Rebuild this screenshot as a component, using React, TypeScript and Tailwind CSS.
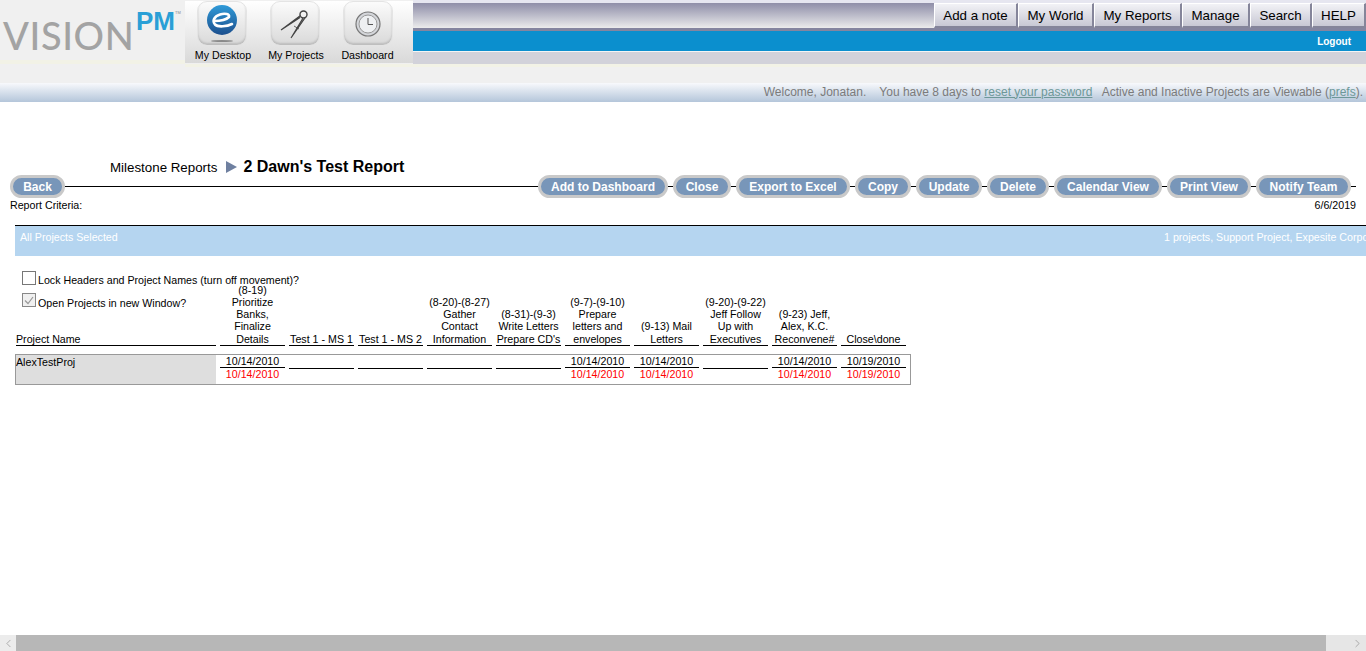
import { ChevronLeft, ChevronRight } from 'lucide-react';

const topTabs = [
  { label: 'Add a note', w: 'w-[84px]' },
  { label: 'My World', w: 'w-[76px]' },
  { label: 'My Reports', w: 'w-[88px]' },
  { label: 'Manage', w: 'w-[68px]' },
  { label: 'Search', w: 'w-[62px]' },
  { label: 'HELP', w: 'w-[54px]' },
];

const actions = [
  { label: 'Add to Dashboard', w: 'w-[130px]' },
  { label: 'Close', w: 'w-[58px]' },
  { label: 'Export to Excel', w: 'w-[114px]' },
  { label: 'Copy', w: 'w-[56px]' },
  { label: 'Update', w: 'w-[66px]' },
  { label: 'Delete', w: 'w-[62px]' },
  { label: 'Calendar View', w: 'w-[108px]' },
  { label: 'Print View', w: 'w-[84px]' },
  { label: 'Notify Team', w: 'w-[95px]' },
];

const milestones = [
  { title: '(8-19)\nPrioritize\nBanks,\nFinalize\nDetails', date: '10/14/2010' },
  { title: 'Test 1 - MS 1' },
  { title: 'Test 1 - MS 2' },
  { title: '(8-20)-(8-27)\nGather\nContact\nInformation' },
  { title: '(8-31)-(9-3)\nWrite Letters\nPrepare CD\'s' },
  { title: '(9-7)-(9-10)\nPrepare\nletters and\nenvelopes', date: '10/14/2010' },
  { title: '(9-13) Mail\nLetters', date: '10/14/2010' },
  { title: '(9-20)-(9-22)\nJeff Follow\nUp with\nExecutives' },
  { title: '(9-23) Jeff,\nAlex, K.C.\nReconvene#', date: '10/14/2010' },
  { title: 'Close\\done', date: '10/19/2010' },
];

function EIcon() {
  return (
    <svg width="32" height="38" viewBox="0 0 32 38">
      <defs>
        <linearGradient id="ball" x1="0" y1="0" x2="0" y2="1">
          <stop offset="0" stopColor="#2f9ad8" />
          <stop offset="1" stopColor="#1c4f8e" />
        </linearGradient>
      </defs>
      <circle cx="16" cy="15" r="15" fill="url(#ball)" />
      <path d="M8 16 C14 16 20 15 23 12 C24 9 19 8 14 9.5 C8 11.5 6 16 9 19.5 C12 22.5 21 21.5 26 19" fill="none" stroke="#fff" strokeWidth="2.6" strokeLinecap="round" />
      <ellipse cx="16" cy="36" rx="11" ry="1" fill="#8a8a8a" />
    </svg>
  );
}

function CompassIcon() {
  return (
    <svg width="30" height="30" viewBox="0 0 30 30" fill="none" stroke="#444">
      <circle cx="23.5" cy="5.5" r="3.5" strokeWidth="1.4" />
      <path d="M20.5 6.5 L1 21 L20 8.5" strokeWidth="1.1" fill="#777" />
      <path d="M23 9 L11 29 L25 9" strokeWidth="1.1" fill="#777" />
      <path d="M14 17 L19 20" strokeWidth="0.8" />
    </svg>
  );
}

function ClockIcon() {
  return (
    <svg width="26" height="26" viewBox="0 0 26 26" fill="none">
      <circle cx="13" cy="13" r="12" fill="#d4d6da" stroke="#777" strokeWidth="1.2" />
      <circle cx="13" cy="13" r="9" fill="#eef0f2" stroke="#999" strokeWidth="1" />
      <path d="M13 7 V13.5 H18" stroke="#555" strokeWidth="1" />
    </svg>
  );
}

function NavButton({ label, icon, labelClass }: { label: string; icon: React.ReactNode; labelClass?: string }) {
  return (
    <div className="flex w-[73px] flex-col items-center">
      <div className="flex h-[45px] w-[50px] items-center justify-center rounded-[10px] border border-[#e4e4e4] bg-gradient-to-b from-[#fbfbfb] to-[#d9d9d9] shadow-[inset_0_-2px_2px_#bdbdbd]">
        {icon}
      </div>
      <span className={`mt-[2px] whitespace-nowrap text-[10.67px] leading-[14px] text-black ${labelClass ?? ''}`}>{label}</span>
    </div>
  );
}

function Pill({ label, w }: { label: string; w: string }) {
  return (
    <div className={`flex h-[23px] shrink-0 items-center justify-center rounded-full border-[3px] border-[#c9c9c9] bg-[#7896b9] text-[12px] font-bold text-white ${w}`}>
      {label}
    </div>
  );
}

export default function App() {
  return (
    <div className="flex h-[651px] w-[1366px] flex-col overflow-hidden bg-white font-['Liberation_Sans',sans-serif]">
      {/* header */}
      <div className="h-[83px] shrink-0 bg-[#f0f0f0]">
        <div className="flex h-[64px]">
          <div className="w-[185px] shrink-0">
            <div className="flex h-[60px] items-start pl-[3px]">
              <span className="mt-[9px] w-[133px] font-['Lato',sans-serif] text-[38px] font-medium leading-[52px] tracking-[0.6px] text-[#a3a3a3]">VISION</span>
              <span className="mt-[7px] text-[26px] font-bold leading-[28px] text-[#2a9fd6]">PM</span>
              <span className="mt-[10px] text-[4px] leading-[5px] text-[#888]">TM</span>
            </div>
            <div className="h-[4px] bg-[#f2f2e6]" />
          </div>
          <div className="mt-[1px] flex h-[62px] w-[228px] shrink-0 items-start bg-gradient-to-b from-white to-[#d9d9d9]">
            <NavButton label="My Desktop" icon={<EIcon />} labelClass="ml-[3px]" />
            <NavButton label="My Projects" icon={<CompassIcon />} labelClass="ml-[3px]" />
            <NavButton label="Dashboard" icon={<ClockIcon />} />
          </div>
          <div className="flex flex-1 flex-col">
            <div className="flex h-[31px] justify-end border-t-[3px] border-b-[3px] border-t-[#e6e6f0] border-b-[#85859f] bg-gradient-to-b from-[#8f8ea8] to-[#ececec]">
              {topTabs.map((tab) => (
                <div
                  key={tab.label}
                  className={`flex h-[25px] items-center justify-center border-l border-t border-white border-r-2 border-b-2 border-r-[#85859a] border-b-[#85859a] bg-gradient-to-b from-[#f2f2f6] to-[#c8c8d4] pt-[1px] text-[13.33px] text-black ${tab.w}`}
                >
                  {tab.label}
                </div>
              ))}
            </div>
            <div className="flex h-[20px] items-center justify-end bg-[#0b8fce] pr-[15px] pt-[1px] text-[10px] font-bold text-white">Logout</div>
            <div className="h-[13px] border-t border-t-[#f4f4f4] bg-[#d2d2da]" />
          </div>
        </div>
        <div className="ml-[185px] h-[3px] bg-[#f2f2e6]" />
      </div>
      <div className="flex h-[19px] shrink-0 items-center justify-end bg-gradient-to-b from-[#f8f9fc] to-[#b4c6da] pb-[2px] pr-[3px] text-[12px] text-[#7b7b7b]">
        <span className="whitespace-pre">
          Welcome, Jonatan.{'    '}You have 8 days to <span className="text-[#6d9898] underline">reset your password</span>{'   '}Active and Inactive Projects are Viewable (<span className="text-[#6d9898] underline">prefs</span>).
        </span>
      </div>

      {/* report */}
      <div className="flex-1 overflow-hidden">
        <div className="ml-[110px] mt-[55px] flex h-[20px] items-center">
          <span className="pt-[1px] text-[13.33px] text-black">Milestone Reports</span>
          <svg className="ml-[9px]" width="11" height="12" viewBox="0 0 11 12">
            <path d="M0 0 L11 6 L0 12 Z" fill="#6f80a0" />
          </svg>
          <span className="ml-[6px] text-[16px] font-bold text-black">2 Dawn's Test Report</span>
        </div>
        <div className="ml-[10px] mt-[-2px] flex w-[1346px] items-center">
          <Pill label="Back" w="w-[55px]" />
          <div className="h-px flex-1 bg-black" />
          {actions.map((action) => (
            <div key={action.label} className="flex items-center">
              <Pill label={action.label} w={action.w} />
              <div className="h-px w-[5px] bg-black" />
            </div>
          ))}
        </div>
        <div className="ml-[10px] flex h-[14px] w-[1346px] items-center justify-between text-[10.67px] text-black">
          <span>Report Criteria:</span>
          <span>6/6/2019</span>
        </div>

        <div className="ml-[15px] mt-[13px] grid h-[31px] w-[1600px] grid-cols-[1149px_1fr] border-t border-black bg-[#b5d5f0] pt-[5px] text-[10.67px] leading-[12px] text-white">
          <span className="pl-[5px]">All Projects Selected</span>
          <span>1 projects, Support Project, Expesite Corporate</span>
        </div>

        <div className="ml-[22px] mt-[15px] flex h-[14px] items-start">
          <div className="h-[14px] w-[14px] shrink-0 border border-[#777] bg-white" />
          <span className="ml-[2px] mt-[3px] text-[10.67px] leading-[12px] text-black">Lock Headers and Project Names (turn off movement)?</span>
        </div>

        {/* milestone columns */}
        <div className="ml-[16px] flex h-[61px] items-stretch gap-[4px]">
          <div className="flex w-[200px] flex-col justify-between border-b border-black text-[10.67px] leading-[12px] text-black">
            <div className="ml-[6px] mt-[8px] flex items-start">
              <div className="flex h-[14px] w-[14px] shrink-0 items-center justify-center border border-[#888] bg-[#f0f0f0]">
                <svg width="10" height="9" viewBox="0 0 10 9" fill="none">
                  <path d="M1 4.5 L4 7.5 L9 1" stroke="#999" strokeWidth="1.2" />
                </svg>
              </div>
              <span className="ml-[2px] mt-[4px]">Open Projects in new Window?</span>
            </div>
            <span>Project Name</span>
          </div>
          {milestones.map((m) => (
            <div key={m.title} className="flex w-[65px] shrink-0 flex-col justify-end border-b border-black text-center text-[10.67px] leading-[12.3px] text-black">
              <span className="whitespace-pre">{m.title}</span>
            </div>
          ))}
        </div>

        <div className="ml-[15px] mt-[8px] flex h-[31px] w-[896px] gap-[4px] border border-[#999]">
          <div className="w-[200px] shrink-0 bg-[#dedede] pt-[1px] text-[10.67px] leading-[12px] text-black">AlexTestProj</div>
          {milestones.map((m) => (
            <div key={m.title} className="w-[65px] shrink-0 text-center text-[10.67px] leading-[12px]">
              {m.date ? (
                <>
                  <div className="h-[13px] border-b border-black text-black">{m.date}</div>
                  <div className="text-[#ff0000]">{m.date}</div>
                </>
              ) : (
                <div className="h-[14px] border-b border-black" />
              )}
            </div>
          ))}
        </div>
      </div>

      {/* horizontal scroll bar */}
      <div className="flex h-[16px] shrink-0">
        <div className="flex w-[16px] items-center justify-center bg-[#ececec] text-[#777]">
          <ChevronLeft size={13} strokeWidth={1} />
        </div>
        <div className="w-[1310px] bg-[#b7b7b7]" />
        <div className="flex w-[40px] items-center justify-end bg-[#e6e6e6] pr-[2px] text-[#777]">
          <ChevronRight size={13} strokeWidth={1} />
        </div>
      </div>
    </div>
  );
}
